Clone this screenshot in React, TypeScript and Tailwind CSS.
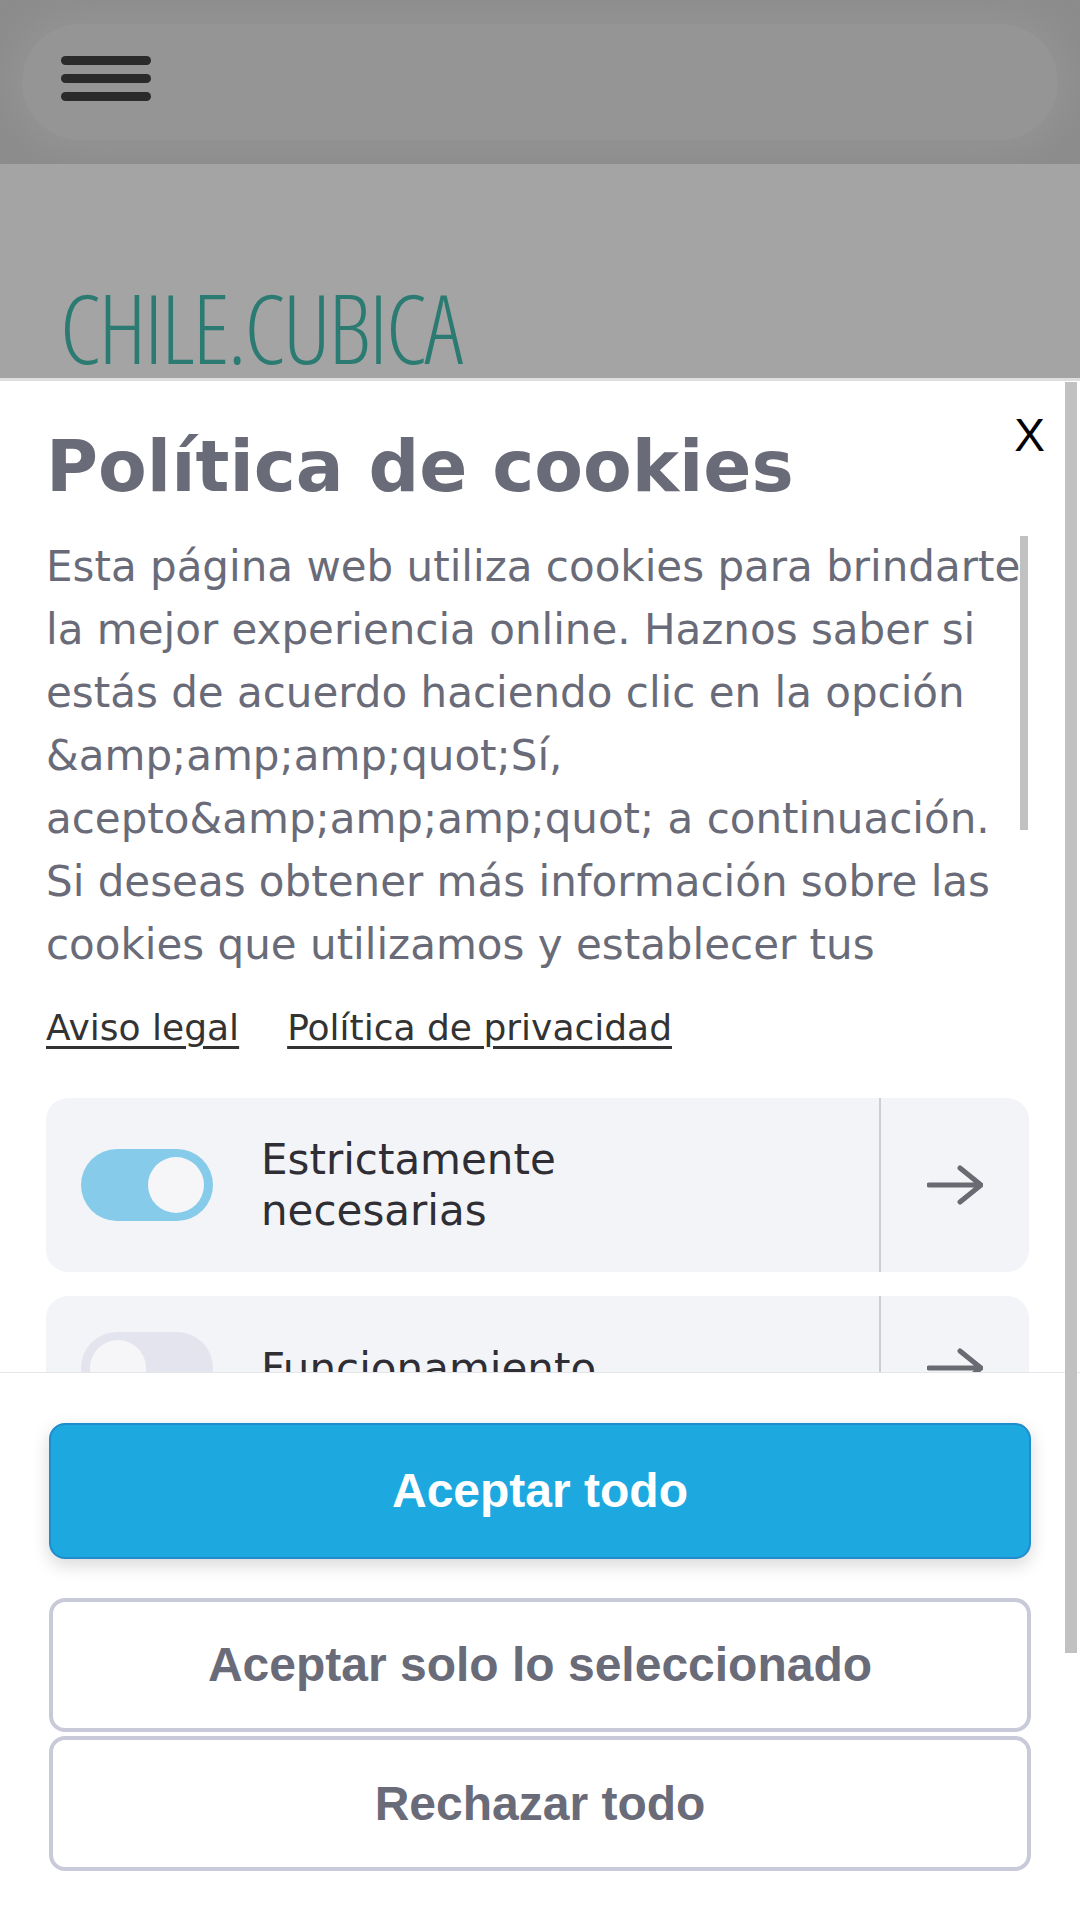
import { useState } from 'react';

const BODY =
  'Esta página web utiliza cookies para brindarte la mejor experiencia online. Haznos saber si estás de acuerdo haciendo clic en la opción &amp;amp;amp;quot;Sí, acepto&amp;amp;amp;quot; a continuación. Si deseas obtener más información sobre las cookies que utilizamos y establecer tus preferencias, haz clic en &amp;amp;amp;quot;Configuración&amp;amp;amp;quot; o consulta nuestra política de cookies.';

const CATEGORIES = [
  { label: 'Estrictamente necesarias', on: true },
  { label: 'Funcionamiento', on: false },
  { label: 'Estadísticas', on: false },
];

function Arrow() {
  return (
    <svg width="56" height="40" viewBox="0 0 56 40" fill="none">
      <path
        d="M2 20 H54 M33 3 L54 20 L33 37"
        stroke="#696a72"
        strokeWidth="5"
        strokeLinecap="round"
        strokeLinejoin="round"
      />
    </svg>
  );
}

function Toggle({ on }: { on: boolean }) {
  return (
    <div
      className={
        'w-[132px] h-[72px] shrink-0 rounded-full flex items-center px-[9px] ' +
        (on ? 'bg-[#86cbea] justify-end' : 'bg-[#e4e4ee] justify-start')
      }
    >
      <div className="w-[56px] h-[56px] rounded-full bg-[#f6f6f9]" />
    </div>
  );
}

export default function App() {
  const [cats] = useState(CATEGORIES);

  return (
    <div className="w-[1080px] h-[1920px] overflow-hidden flex flex-col bg-white font-['DejaVu_Sans',sans-serif]">
      {/* cabecera */}
      <div className="h-[164px] shrink-0 bg-[#8c8c8c] flex px-[22px] py-[24px]">
        <div className="flex-1 rounded-[60px] bg-[#959595] shadow-[0_0_30px_14px_#939393] flex items-center pl-[39px]">
          <div className="flex flex-col gap-[9px] -mt-[8px]">
            <div className="w-[90px] h-[9px] rounded-full bg-[#2a2a2a]" />
            <div className="w-[90px] h-[9px] rounded-full bg-[#2a2a2a]" />
            <div className="w-[90px] h-[9px] rounded-full bg-[#2a2a2a]" />
          </div>
        </div>
      </div>

      {/* hero */}
      <div className="h-[214px] shrink-0 bg-[#a4a4a4] overflow-hidden pl-[60px] pt-[116px]">
        <div className="text-[95px] leading-[95px] font-light text-[#2b7b73] font-['Open_Sans',sans-serif] [font-stretch:75%] tracking-[-2px]">
          CHILE.CUBICA
        </div>
      </div>

      {/* modal */}
      <div className="relative flex-1 flex flex-col min-h-0 border-t-[3px] border-[#dedede]">
        <div className="relative flex-1 min-h-0 overflow-hidden pl-[46px] pr-[51px] pt-[43px]">
          <span className="absolute right-[35px] top-[26px] text-[46px] leading-[56px] text-black font-['Liberation_Sans',sans-serif]">
            X
          </span>
          <h1 className="text-[71px] leading-[86px] font-bold text-[#6a6b78]">Política de cookies</h1>

          <div className="relative mt-[25px] h-[441px] overflow-hidden">
            <p className="text-[42px] leading-[63px] text-[#6a6b78]">{BODY}</p>
            <div className="absolute right-[1px] top-[1px] w-[8px] h-[294px] bg-[#c1c1c1]" />
          </div>

          <div className="mt-[25px] flex gap-[48px] text-[36px] leading-[54px] text-[#333333]">
            <a className="underline underline-offset-[6px] decoration-[3px]">Aviso legal</a>
            <a className="underline underline-offset-[6px] decoration-[3px]">Política de privacidad</a>
          </div>

          <div className="mt-[43px] flex flex-col gap-[24px]">
            {cats.map((c) => (
              <div key={c.label} className="flex rounded-[22px] bg-[#f3f4f8]">
                <div className="flex-1 flex items-center gap-[48px] pl-[35px] py-[36px]">
                  <Toggle on={c.on} />
                  <span className="max-w-[380px] text-[42px] leading-[51px] text-[#2e2e34]">{c.label}</span>
                </div>
                <div className="w-[2px] bg-[#cdcdd2]" />
                <div className="w-[148px] flex items-center justify-center">
                  <Arrow />
                </div>
              </div>
            ))}
          </div>
        </div>

        {/* botones */}
        <div className="h-[548px] shrink-0 border-t border-[#e6e6ea] bg-white px-[49px] pt-[50px] flex flex-col font-['Liberation_Sans',sans-serif] font-bold text-[48px]">
          <button className="h-[136px] rounded-[16px] bg-[#1da9e0] border-2 border-[#1f8ccc] text-white shadow-[0_6px_18px_rgba(0,0,0,0.16)]">
            Aceptar todo
          </button>
          <button className="mt-[39px] h-[134px] rounded-[16px] bg-white border-[4px] border-[#c9cad9] text-[#6a6b78]">
            Aceptar solo lo seleccionado
          </button>
          <button className="mt-[4px] h-[135px] rounded-[16px] bg-white border-[4px] border-[#c9cad9] text-[#6a6b78]">
            Rechazar todo
          </button>
        </div>

        <div className="absolute right-[3px] top-[1px] w-[12px] h-[1271px] bg-[#c1c1c1]" />
      </div>
    </div>
  );
}
